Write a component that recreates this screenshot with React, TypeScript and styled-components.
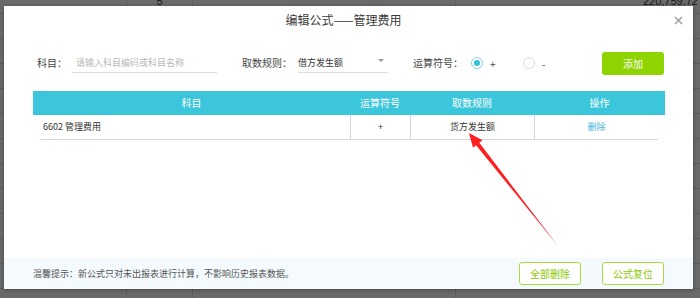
import React from "react";
import styled, { createGlobalStyle } from "styled-components";

const GlobalStyle = createGlobalStyle`
  html, body { margin: 0; padding: 0; }
  body {
    font-family: "Noto Sans CJK SC", "Noto Sans", sans-serif;
    background: #6a6a6a;
  }
`;

const Page = styled.div`
  position: relative;
  width: 700px;
  height: 298px;
  overflow: hidden;
  background: #6a6a6a;
`;

// the report sheet that sits under the dark overlay
const Sheet = styled.div`
  display: flex;
  flex-direction: column;
  margin-top: -11px;
`;

const SheetRow = styled.div`
  display: grid;
  grid-template-columns: 127px 66px 263px 244px;
  height: 24px;
  border-bottom: 1px solid #5c5c5c;
`;

const SheetCell = styled.div<{ $align?: string }>`
  border-right: 1px solid #5c5c5c;
  font-family: "Liberation Sans", Arial, sans-serif;
  font-size: 11px;
  line-height: 24px;
  color: #151515;
  text-align: ${(p) => p.$align || "left"};
  padding: 0 2px;
  white-space: nowrap;
  &:last-child { border-right: none; }
`;

const Modal = styled.div`
  position: absolute;
  left: 4px;
  top: 6px;
  width: 689px;
  height: 283px;
  background: #fff;
  display: flex;
  flex-direction: column;
  box-shadow: 0 1px 4px rgba(0, 0, 0, 0.35);
`;

const Header = styled.div`
  display: grid;
  grid-template-columns: 1fr auto 1fr;
  align-items: center;
  height: 28px;
  padding-right: 10px;
`;

const Title = styled.div`
  grid-column: 2;
  font-size: 12px;
  color: #3a3a3a;
  line-height: 28px;
`;

const Close = styled.div`
  justify-self: end;
  display: flex;
  align-items: center;
`;

const FormRow = styled.div`
  display: flex;
  align-items: center;
  height: 24px;
  margin-top: 17px;
  padding: 0 29px 0 33px;
`;

const Label = styled.span<{ $gap?: number }>`
  font-size: 10px;
  line-height: 14px;
  color: #444;
  margin-left: ${(p) => p.$gap || 0}px;
  white-space: nowrap;
`;

const Field = styled.div<{ $width: number; $gap: number }>`
  position: relative;
  width: ${(p) => p.$width}px;
  height: 20px;
  margin-left: ${(p) => p.$gap}px;
  border-bottom: 1px solid #dedede;
  display: flex;
  align-items: center;
  box-sizing: border-box;
`;

const Placeholder = styled.span`
  font-size: 9px;
  color: #b8b8b8;
  padding-left: 4px;
`;

const SelectText = styled.span`
  font-size: 9px;
  color: #333;
  flex: 1;
`;

const Caret = styled.span`
  width: 0;
  height: 0;
  border-left: 3px solid transparent;
  border-right: 3px solid transparent;
  border-top: 3px solid #999;
  margin-right: 4px;
  margin-bottom: 4px;
`;

const Radio = styled.span<{ $checked?: boolean; $gap: number }>`
  width: 12px;
  height: 12px;
  box-sizing: border-box;
  border-radius: 50%;
  margin-left: ${(p) => p.$gap}px;
  border: 1px solid ${(p) => (p.$checked ? "#7fd6e6" : "#dcdcdc")};
  display: flex;
  align-items: center;
  justify-content: center;
  &::after {
    content: "";
    width: 6px;
    height: 6px;
    border-radius: 50%;
    background: ${(p) => (p.$checked ? "#36bfd9" : "transparent")};
  }
`;

const RadioText = styled.span`
  font-size: 10px;
  color: #444;
  margin-left: 7px;
  width: 6px;
`;

const SolidButton = styled.button`
  margin-left: auto;
  width: 62px;
  height: 23px;
  border: none;
  border-radius: 3px;
  background: #8fd300;
  color: #fff;
  font-family: inherit;
  font-size: 10px;
  cursor: pointer;
`;

const Table = styled.div`
  margin: 16px 28px 0 29px;
`;

const HeadRow = styled.div`
  display: grid;
  grid-template-columns: 317px 60px 124px 1fr;
  height: 24px;
  background: #3cc6dc;
`;

const HeadCell = styled.div`
  color: #fff;
  font-size: 10px;
  line-height: 24px;
  text-align: center;
`;

const BodyRow = styled.div`
  display: grid;
  grid-template-columns: 310px 60px 124px 1fr;
  height: 25px;
  margin: 0 7px;
  border-bottom: 1px solid #d6d6d6;
  box-sizing: border-box;
`;

const Cell = styled.div<{ $left?: boolean; $link?: boolean }>`
  font-size: 9px;
  line-height: 24px;
  color: ${(p) => (p.$link ? "#45b6db" : "#333")};
  text-align: ${(p) => (p.$left ? "left" : "center")};
  padding-left: ${(p) => (p.$left ? "3px" : "0")};
  & + & { border-left: 1px solid #d6d6d6; }
`;

const Spacer = styled.div`
  flex: 1;
`;

const Footer = styled.div`
  display: flex;
  align-items: center;
  height: 31px;
  padding: 0 29px;
  background: #f4fafd;
  gap: 21px;
`;

const Tip = styled.span`
  font-size: 9px;
  color: #555;
  margin-right: auto;
`;

const OutlineButton = styled.button`
  width: 62px;
  height: 23px;
  border: 1px solid #a9da3e;
  border-radius: 3px;
  background: #fff;
  color: #8cc800;
  font-family: inherit;
  font-size: 10px;
  cursor: pointer;
`;

const Annotation = styled.svg`
  position: absolute;
  left: 0;
  top: 0;
  pointer-events: none;
`;

const sheetRows = Array.from({ length: 14 });

export default function App() {
  return (
    <Page>
      <GlobalStyle />
      <Sheet>
        {sheetRows.map((_, i) => (
          <SheetRow key={i}>
            <SheetCell />
            <SheetCell $align="center">{i === 0 ? "5" : ""}</SheetCell>
            <SheetCell />
            <SheetCell $align="right">{i === 0 ? "220,759.72" : ""}</SheetCell>
          </SheetRow>
        ))}
      </Sheet>

      <Modal>
        <Header>
          <Title>编辑公式——管理费用</Title>
          <Close>
            <svg width="9" height="9" viewBox="0 0 9 9">
              <path d="M1 1L8 8M8 1L1 8" stroke="#9a9a9a" strokeWidth="1.4" />
            </svg>
          </Close>
        </Header>

        <FormRow>
          <Label>科目：</Label>
          <Field $width={145} $gap={5}>
            <Placeholder>请输入科目编码或科目名称</Placeholder>
          </Field>
          <Label $gap={25}>取数规则：</Label>
          <Field $width={90} $gap={6}>
            <SelectText>借方发生额</SelectText>
            <Caret />
          </Field>
          <Label $gap={25}>运算符号：</Label>
          <Radio $checked $gap={8} />
          <RadioText>+</RadioText>
          <Radio $gap={27} />
          <RadioText>-</RadioText>
          <SolidButton>添加</SolidButton>
        </FormRow>

        <Table>
          <HeadRow>
            <HeadCell>科目</HeadCell>
            <HeadCell>运算符号</HeadCell>
            <HeadCell>取数规则</HeadCell>
            <HeadCell>操作</HeadCell>
          </HeadRow>
          <BodyRow>
            <Cell $left>6602 管理费用</Cell>
            <Cell>+</Cell>
            <Cell>货方发生额</Cell>
            <Cell $link>删除</Cell>
          </BodyRow>
        </Table>

        <Spacer />

        <Footer>
          <Tip>温馨提示：新公式只对未出报表进行计算，不影响历史报表数据。</Tip>
          <OutlineButton>全部删除</OutlineButton>
          <OutlineButton>公式复位</OutlineButton>
        </Footer>
      </Modal>

      <Annotation width="700" height="298" viewBox="0 0 700 298">
        <polygon
          points="469,133 482.4,140.3 479.3,142.8 558,246 476.1,145.2 473,147.7"
          fill="#ff1f1f"
        />
      </Annotation>
    </Page>
  );
}
